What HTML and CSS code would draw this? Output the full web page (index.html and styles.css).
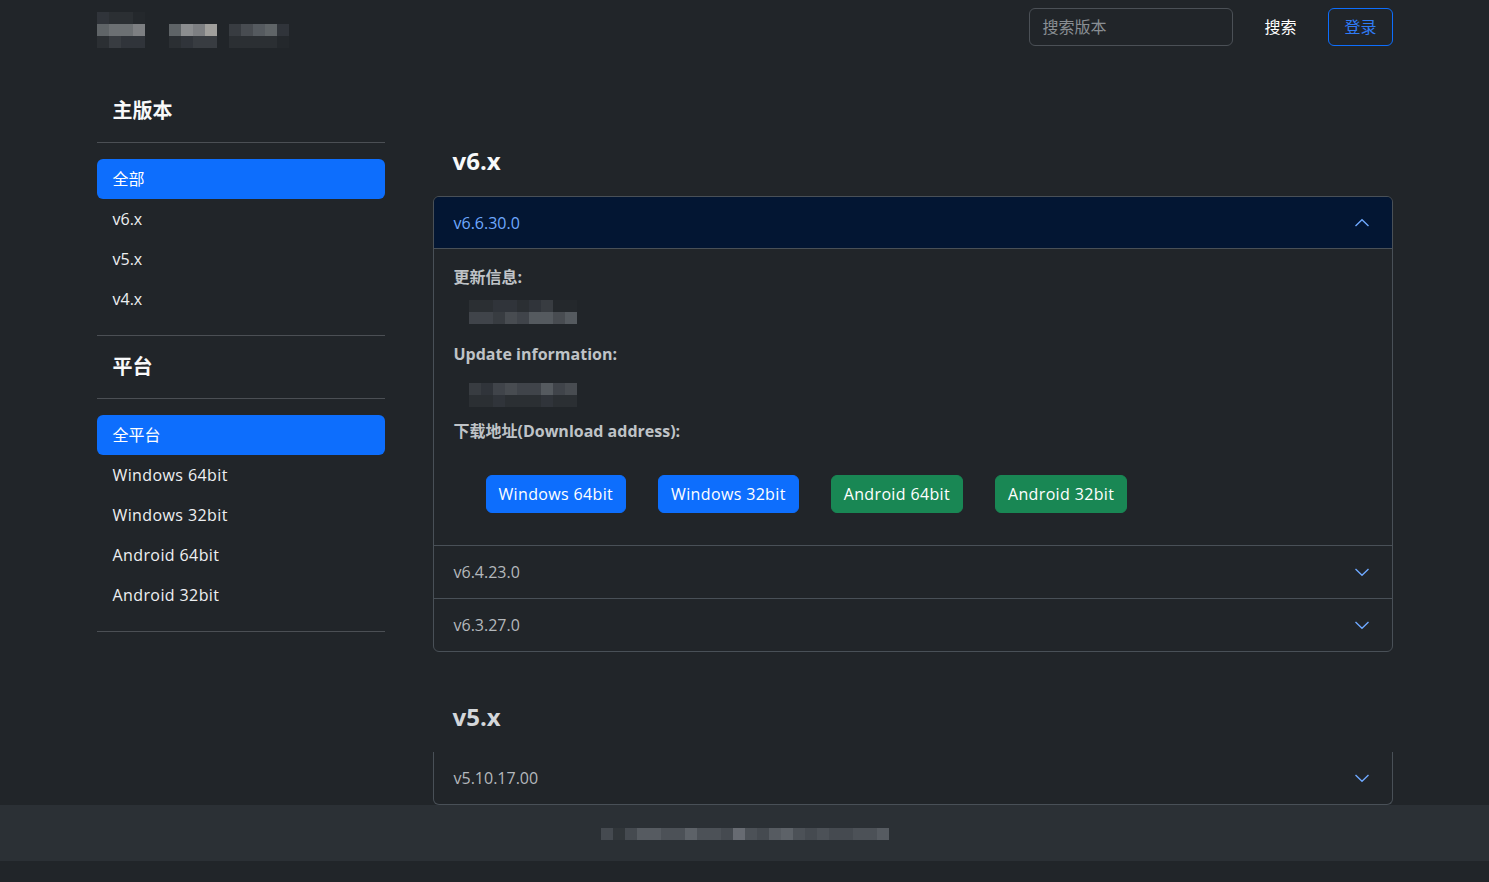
FILE: index.html
```html
<!DOCTYPE html>
<html lang="zh-CN">
<head>
<meta charset="utf-8">
<title>版本下载</title>
<link rel="stylesheet" href="styles.css">
</head>
<body>
<header class="navbar">
  <div class="container nav-inner">
    <div class="brand">
      <div class="mosaic cols4 logo">
        <i class="g2"></i><i class="g1"></i><i class="g1"></i><i class="g0"></i>
        <i class="g7"></i><i class="g8"></i><i class="g8"></i><i class="g9"></i>
        <i class="g1"></i><i class="g3"></i><i class="g2"></i><i class="g2"></i>
      </div>
      <div class="mosaic cols4 navlink">
        <i class="g7"></i><i class="g10"></i><i class="g9"></i><i class="g11"></i>
        <i class="g1"></i><i class="g2"></i><i class="g3"></i><i class="g3"></i>
      </div>
      <div class="mosaic cols5 navlink">
        <i class="g3"></i><i class="g5"></i><i class="g6"></i><i class="g7"></i><i class="g2"></i>
        <i class="g1"></i><i class="g1"></i><i class="g1"></i><i class="g1"></i><i class="g0"></i>
      </div>
    </div>
    <form class="search">
      <input class="search-input" type="text" placeholder="搜索版本">
      <button class="btn-search" type="button">搜索</button>
      <button class="btn-login" type="button">登录</button>
    </form>
  </div>
</header>

<div class="container layout">
  <aside class="sidebar">
    <h5 class="side-title">主版本</h5>
    <hr class="rule">
    <ul class="side-list">
      <li class="side-item active">全部</li>
      <li class="side-item">v6.x</li>
      <li class="side-item">v5.x</li>
      <li class="side-item">v4.x</li>
    </ul>
    <hr class="rule">
    <h5 class="side-title">平台</h5>
    <hr class="rule">
    <ul class="side-list">
      <li class="side-item active">全平台</li>
      <li class="side-item wide">Windows 64bit</li>
      <li class="side-item wide">Windows 32bit</li>
      <li class="side-item wide">Android 64bit</li>
      <li class="side-item wide">Android 32bit</li>
    </ul>
    <hr class="rule">
  </aside>

  <main class="main">
    <section class="section">
      <h4 class="sec-title">v6.x</h4>
      <div class="accordion">
        <div class="acc-item">
          <div class="acc-head open">
            <span>v6.6.30.0</span>
            <svg class="chev up" viewBox="0 0 16 16" width="16" height="16"><path d="M1.5 5 L8 11.2 L14.5 5" fill="none" stroke="currentColor" stroke-width="1.4"/></svg>
          </div>
          <div class="acc-body">
            <p class="label">更新信息:</p>
            <div class="mosaic cols9 info">
              <i class="g1"></i><i class="g1"></i><i class="g2"></i><i class="g2"></i><i class="g1"></i><i class="g2"></i><i class="g3"></i><i class="g0"></i><i class="g0"></i>
              <i class="g4"></i><i class="g4"></i><i class="g3"></i><i class="g5"></i><i class="g4"></i><i class="g6"></i><i class="g6"></i><i class="g5"></i><i class="g6"></i>
            </div>
            <p class="label gap1">Update information:</p>
            <div class="mosaic cols9 info gap2">
              <i class="g3"></i><i class="g2"></i><i class="g4"></i><i class="g5"></i><i class="g4"></i><i class="g4"></i><i class="g6"></i><i class="g4"></i><i class="g5"></i>
              <i class="g1"></i><i class="g1"></i><i class="g2"></i><i class="g1"></i><i class="g1"></i><i class="g1"></i><i class="g2"></i><i class="g1"></i><i class="g1"></i>
            </div>
            <p class="label gap3">下载地址(Download address):</p>
            <div class="downloads">
              <a class="btn blue">Windows 64bit</a>
              <a class="btn blue">Windows 32bit</a>
              <a class="btn green">Android 64bit</a>
              <a class="btn green">Android 32bit</a>
            </div>
          </div>
        </div>
        <div class="acc-item">
          <div class="acc-head">
            <span>v6.4.23.0</span>
            <svg class="chev" viewBox="0 0 16 16" width="16" height="16"><path d="M1.5 5 L8 11.2 L14.5 5" fill="none" stroke="currentColor" stroke-width="1.4"/></svg>
          </div>
        </div>
        <div class="acc-item">
          <div class="acc-head">
            <span>v6.3.27.0</span>
            <svg class="chev" viewBox="0 0 16 16" width="16" height="16"><path d="M1.5 5 L8 11.2 L14.5 5" fill="none" stroke="currentColor" stroke-width="1.4"/></svg>
          </div>
        </div>
      </div>
    </section>

    <section class="section">
      <h4 class="sec-title dim">v5.x</h4>
      <div class="accordion cut">
        <div class="acc-item">
          <div class="acc-head">
            <span>v5.10.17.00</span>
            <svg class="chev" viewBox="0 0 16 16" width="16" height="16"><path d="M1.5 5 L8 11.2 L14.5 5" fill="none" stroke="currentColor" stroke-width="1.4"/></svg>
          </div>
        </div>
      </div>
    </section>
  </main>
</div>

<footer class="footer">
  <div class="mosaic cols24 foot">
    <i class="f1"></i><i class="f0"></i><i class="f1"></i><i class="f3"></i><i class="f3"></i><i class="f2"></i><i class="f2"></i><i class="f4"></i><i class="f2"></i><i class="f2"></i><i class="f1"></i><i class="f5"></i>
    <i class="f2"></i><i class="f1"></i><i class="f3"></i><i class="f4"></i><i class="f2"></i><i class="f1"></i><i class="f2"></i><i class="f1"></i><i class="f1"></i><i class="f2"></i><i class="f2"></i><i class="f3"></i>
  </div>
</footer>
</body>
</html>
```

FILE: styles.css
```css
* { box-sizing: border-box; }

html, body {
  margin: 0;
  padding: 0;
  background: #212529;
}

body {
  color: #dee2e6;
  font-family: "Segoe UI", "Open Sans", "Noto Sans CJK SC", sans-serif;
  font-size: 16px;
  line-height: 1.5;
}

.container {
  width: 1296px;
  margin: 0 auto;
}

/* mosaic (censored content) */
.mosaic { display: grid; grid-auto-rows: 12px; }
.mosaic i { display: block; width: 12px; height: 12px; }
.cols4 { grid-template-columns: repeat(4, 12px); }
.cols5 { grid-template-columns: repeat(5, 12px); }
.cols9 { grid-template-columns: repeat(9, 12px); }
.cols24 { grid-template-columns: repeat(24, 12px); }

.g0 { background: #24282c; }
.g1 { background: #2b2f33; }
.g2 { background: #30343a; }
.g3 { background: #383c41; }
.g4 { background: #40444a; }
.g5 { background: #484c51; }
.g6 { background: #555a5f; }
.g7 { background: #5f6467; }
.g8 { background: #6c7073; }
.g9 { background: #7d7f82; }
.g10 { background: #8b8d8f; }
.g11 { background: #a09f9c; }

.f0 { background: #31363a; }
.f1 { background: #454a50; }
.f2 { background: #4c5157; }
.f3 { background: #565b61; }
.f4 { background: #5d6268; }
.f5 { background: #676b72; }

/* navbar */
.navbar { height: 54px; }
.nav-inner {
  height: 54px;
  display: flex;
  align-items: center;
  justify-content: space-between;
}
.brand {
  display: flex;
  align-items: flex-start;
  height: 54px;
  padding-top: 12px;
}
.logo { margin-right: 24px; }
.navlink { margin-top: 12px; margin-right: 12px; }

.search {
  display: flex;
  align-items: center;
  margin: 0;
}
.search-input {
  width: 204px;
  height: 38px;
  padding: 6px 12px;
  background: #212529;
  border: 1px solid #4b5056;
  border-radius: 6px;
  color: #dee2e6;
  font: inherit;
  outline: none;
}
.search-input::placeholder { color: #8a8f94; }
.btn-search {
  margin-left: 18px;
  height: 38px;
  padding: 6px 12px;
  background: transparent;
  border: 1px solid transparent;
  color: #ffffff;
  font: inherit;
}
.btn-login {
  margin-left: 19px;
  height: 38px;
  padding: 6px 15px;
  background: transparent;
  border: 1px solid #0d6efd;
  border-radius: 6px;
  color: #2f7bf5;
  font: inherit;
}

/* layout */
.layout {
  display: flex;
  align-items: flex-start;
  gap: 48px;
}

.sidebar {
  width: 288px;
  flex: none;
  padding-top: 26px;
}
.side-title {
  margin: 19px 0;
  padding-left: 16px;
  font-size: 20px;
  line-height: 24px;
  font-weight: 700;
  color: #f8f9fa;
}
.rule {
  margin: 0;
  border: 0;
  border-top: 1px solid #4b4f54;
}
.side-list {
  list-style: none;
  margin: 0;
  padding: 16px 0;
}
.side-item {
  height: 40px;
  line-height: 40px;
  padding: 0 16px;
  border-radius: 6px;
  color: #eef0f2;
}
.side-item.wide { letter-spacing: 0.4px; }
.side-item.active {
  background: #0d6efd;
  color: #ffffff;
}

.main {
  flex: 1;
  padding-top: 42px;
}
.section { padding-top: 52px; }
.sec-title {
  margin: 0 0 22px;
  padding-left: 20px;
  font-size: 24px;
  line-height: 26px;
  font-weight: 700;
  color: #f8f9fa;
}
.sec-title.dim { color: #d4d7da; }

.accordion {
  border: 1px solid #495057;
  border-radius: 6px;
  overflow: hidden;
}
.accordion.cut {
  border-top: 0;
  border-radius: 0 0 6px 6px;
}
.acc-item + .acc-item { border-top: 1px solid #495057; }

.acc-head {
  height: 52px;
  display: flex;
  align-items: center;
  justify-content: space-between;
  padding: 0 22px 0 20px;
  color: #b4b8bc;
}
.acc-head.open {
  background: #031633;
  color: #6ea8fe;
  border-bottom: 1px solid #495057;
}
.chev { color: #6ea8fe; display: block; }
.chev.up { transform: rotate(180deg); }

.acc-body {
  padding: 16px 20px 32px;
}
.label {
  margin: 0;
  height: 24px;
  line-height: 24px;
  font-weight: 700;
  color: #bfc3c7;
}
.info { margin-top: 11px; padding-left: 15px; }
.gap1 { margin-top: 18px; }
.gap2 { margin-top: 17px; }
.gap3 { margin-top: 12px; }

.downloads {
  display: flex;
  gap: 32px;
  margin-top: 32px;
  padding-left: 32px;
}
.btn {
  display: inline-block;
  height: 38px;
  line-height: 24px;
  padding: 6px 12px;
  border: 1px solid transparent;
  border-radius: 6px;
  color: #ffffff;
  letter-spacing: 0.35px;
  cursor: pointer;
}
.btn.blue { background: #0d6efd; border-color: #0d6efd; }
.btn.green { background: #198754; border-color: #198754; }

/* footer */
.footer {
  height: 56px;
  background: #2b3035;
  display: flex;
  justify-content: center;
  padding-top: 23px;
}
```
